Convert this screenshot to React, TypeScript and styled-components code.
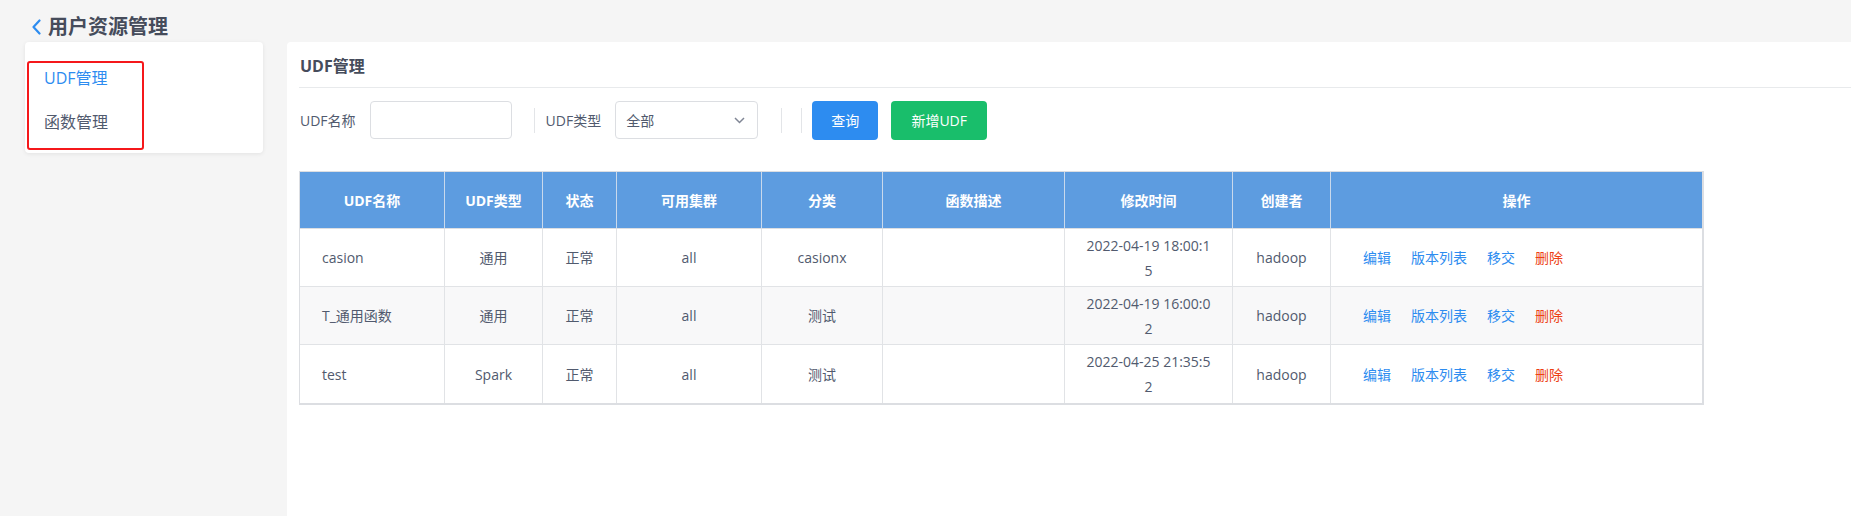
import React from "react";
import styled, { createGlobalStyle } from "styled-components";

const GlobalStyle = createGlobalStyle`
  html, body { margin: 0; padding: 0; }
  body {
    background: #f5f5f5;
    font-family: "Open Sans", "Noto Sans CJK SC", sans-serif;
    color: #515a6e;
  }
  * { box-sizing: border-box; }
`;

const Page = styled.div`
  display: flex;
  flex-direction: column;
  min-height: 516px;
`;

const TopBar = styled.div`
  height: 42px;
  padding: 11px 0 0 31px;
  display: flex;
  align-items: center;
  gap: 6px;
`;

const BackIcon = styled.svg`
  width: 11px;
  height: 16px;
  flex: none;
`;

const PageTitle = styled.h1`
  margin: 0;
  font-size: 20px;
  font-weight: 700;
  color: #464c5b;
  line-height: 24px;
`;

const Body = styled.div`
  flex: 1;
  display: flex;
  align-items: flex-start;
  gap: 24px;
  padding-left: 25px;
`;

const SideCard = styled.div`
  width: 238px;
  height: 111px;
  background: #fff;
  border-radius: 4px;
  box-shadow: 0 1px 4px rgba(0, 0, 0, 0.08);
  padding: 19px 0 0 2px;
`;

const Highlight = styled.div`
  width: 117px;
  height: 89px;
  border: 2px solid #f5181b;
  border-radius: 3px;
  padding: 0 0 0 15px;
  display: flex;
  flex-direction: column;
  gap: 14px;
`;

const MenuItem = styled.div<{ $active?: boolean }>`
  height: 30px;
  line-height: 30px;
  font-size: 16px;
  color: ${(p) => (p.$active ? "#2d8cf0" : "#515a6e")};
  cursor: pointer;
`;

const MainPanel = styled.div`
  flex: 1;
  align-self: stretch;
  min-height: 474px;
  background: #fff;
  border-top-left-radius: 4px;
  padding: 0 0 0 12px;
`;

const SectionTitle = styled.div`
  padding: 12px 0 9px 1px;
  line-height: 24px;
  font-size: 16px;
  font-weight: 700;
  color: #464c5b;
  border-bottom: 1px solid #e8eaec;
`;

const FilterRow = styled.div`
  display: flex;
  align-items: center;
  margin-top: 13px;
  height: 38px;
  padding-left: 1px;
`;

const FieldLabel = styled.span<{ $ml?: number }>`
  font-size: 14px;
  color: #515a6e;
  margin-left: ${(p) => p.$ml ?? 0}px;
  margin-right: 14px;
  white-space: nowrap;
`;

const TextInput = styled.input`
  width: 142px;
  height: 38px;
  border: 1px solid #dcdee2;
  border-radius: 4px;
  outline: none;
  padding: 0 10px;
  font-family: inherit;
  font-size: 14px;
`;

const VLine = styled.span<{ $ml: number }>`
  width: 1px;
  height: 25px;
  background: #e3e5e8;
  margin-left: ${(p) => p.$ml}px;
`;

const SelectBox = styled.div`
  width: 143px;
  height: 38px;
  border: 1px solid #dcdee2;
  border-radius: 4px;
  display: flex;
  align-items: center;
  justify-content: space-between;
  padding: 0 12px 0 10px;
  font-size: 14px;
  color: #515a6e;
`;

const Caret = styled.svg`
  width: 11px;
  height: 7px;
`;

const Button = styled.button<{ $color: string; $w: number; $ml: number }>`
  width: ${(p) => p.$w}px;
  height: 39px;
  margin-left: ${(p) => p.$ml}px;
  border: none;
  border-radius: 4px;
  background: ${(p) => p.$color};
  color: #fff;
  font-family: inherit;
  font-size: 14px;
  cursor: pointer;
`;

const TableWrap = styled.div`
  margin-top: 32px;
  width: 1405px;
  border-top: 1px solid #dcdee2;
  border-left: 1px solid #dcdee2;
  border-right: 2px solid #dcdee2;
  border-bottom: 2px solid #dcdee2;
`;

const Table = styled.table`
  border-collapse: separate;
  border-spacing: 0;
  table-layout: fixed;
  width: 1402px;
  font-size: 14px;
`;

const Th = styled.th`
  height: 57px;
  background: #5d9ce0;
  color: #fff;
  font-weight: 700;
  font-size: 14px;
  text-align: center;
  border-right: 1px solid #c9d9ec;
  border-bottom: 1px solid #dcdee2;
  &:last-child { border-right: none; }
`;

const Tr = styled.tr<{ $striped?: boolean }>`
  background: ${(p) => (p.$striped ? "#f8f8f9" : "#fff")};
`;

const Td = styled.td<{ $align?: "left" | "center"; $pl?: number }>`
  height: 58px;
  color: #515a6e;
  text-align: ${(p) => p.$align ?? "center"};
  padding: 0 0 0 ${(p) => p.$pl ?? 0}px;
  border-right: 1px solid #e1e3e6;
  border-bottom: 1px solid #e1e3e6;
  vertical-align: middle;
  line-height: 25px;
  tr:last-child > & { border-bottom: none; }
  &:last-child { border-right: none; }
`;

const TimeText = styled.div`
  width: 128px;
  margin: 0 auto;
  word-break: break-all;
  text-align: center;
`;

const Actions = styled.div`
  display: flex;
  gap: 20px;
`;

const ActionLink = styled.a<{ $danger?: boolean }>`
  color: ${(p) => (p.$danger ? "#ed4014" : "#2d8cf0")};
  text-decoration: none;
  cursor: pointer;
`;

const columns = [
  { title: "UDF名称", width: 145 },
  { title: "UDF类型", width: 98 },
  { title: "状态", width: 74 },
  { title: "可用集群", width: 145 },
  { title: "分类", width: 121 },
  { title: "函数描述", width: 182 },
  { title: "修改时间", width: 168 },
  { title: "创建者", width: 98 },
  { title: "操作", width: 371 },
];

const rows = [
  { name: "casion", type: "通用", status: "正常", cluster: "all", cat: "casionx", desc: "", time: "2022-04-19 18:00:15", creator: "hadoop" },
  { name: "T_通用函数", type: "通用", status: "正常", cluster: "all", cat: "测试", desc: "", time: "2022-04-19 16:00:02", creator: "hadoop" },
  { name: "test", type: "Spark", status: "正常", cluster: "all", cat: "测试", desc: "", time: "2022-04-25 21:35:52", creator: "hadoop" },
];

export default function App() {
  return (
    <>
      <GlobalStyle />
      <Page>
        <TopBar>
          <BackIcon viewBox="0 0 11 16">
            <polyline points="8.5,1.5 2.5,8 8.5,14.5" fill="none" stroke="#2d8cf0" strokeWidth="2.2" strokeLinecap="round" strokeLinejoin="round" />
          </BackIcon>
          <PageTitle>用户资源管理</PageTitle>
        </TopBar>
        <Body>
          <SideCard>
            <Highlight>
              <MenuItem $active>UDF管理</MenuItem>
              <MenuItem>函数管理</MenuItem>
            </Highlight>
          </SideCard>
          <MainPanel>
            <SectionTitle>UDF管理</SectionTitle>
            <FilterRow>
              <FieldLabel>UDF名称</FieldLabel>
              <TextInput />
              <VLine $ml={22} />
              <FieldLabel $ml={11}>UDF类型</FieldLabel>
              <SelectBox>
                <span>全部</span>
                <Caret viewBox="0 0 11 7">
                  <polyline points="1,1 5.5,5.5 10,1" fill="none" stroke="#808695" strokeWidth="1.5" />
                </Caret>
              </SelectBox>
              <VLine $ml={23} />
              <VLine $ml={19} />
              <Button $color="#2d8cf0" $w={66} $ml={10}>查询</Button>
              <Button $color="#19be6b" $w={96} $ml={13}>新增UDF</Button>
            </FilterRow>
            <TableWrap>
              <Table>
                <colgroup>
                  {columns.map((c) => (
                    <col key={c.title} style={{ width: c.width }} />
                  ))}
                </colgroup>
                <thead>
                  <tr>
                    {columns.map((c) => (
                      <Th key={c.title}>{c.title}</Th>
                    ))}
                  </tr>
                </thead>
                <tbody>
                  {rows.map((r, i) => (
                    <Tr key={r.name} $striped={i % 2 === 1}>
                      <Td $align="left" $pl={22}>{r.name}</Td>
                      <Td>{r.type}</Td>
                      <Td>{r.status}</Td>
                      <Td>{r.cluster}</Td>
                      <Td>{r.cat}</Td>
                      <Td>{r.desc}</Td>
                      <Td>
                        <TimeText>{r.time}</TimeText>
                      </Td>
                      <Td>{r.creator}</Td>
                      <Td $align="left" $pl={32}>
                        <Actions>
                          <ActionLink>编辑</ActionLink>
                          <ActionLink>版本列表</ActionLink>
                          <ActionLink>移交</ActionLink>
                          <ActionLink $danger>删除</ActionLink>
                        </Actions>
                      </Td>
                    </Tr>
                  ))}
                </tbody>
              </Table>
            </TableWrap>
          </MainPanel>
        </Body>
      </Page>
    </>
  );
}
